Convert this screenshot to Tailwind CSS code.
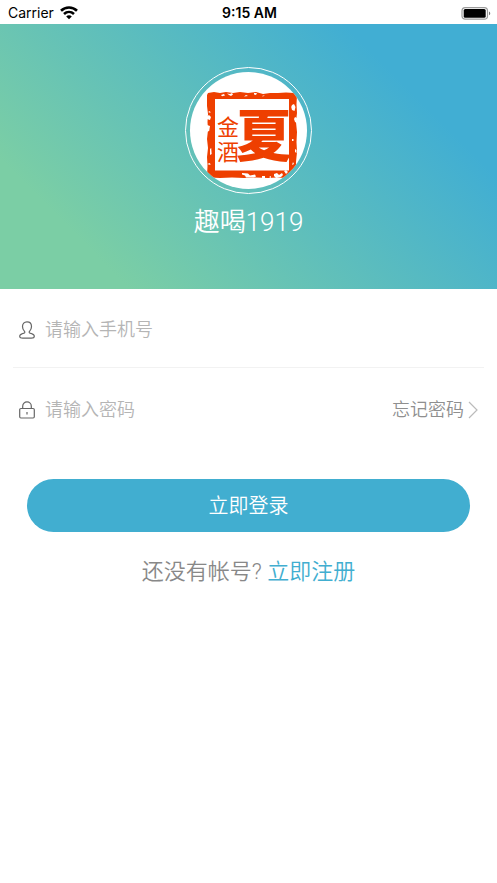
<!DOCTYPE html>
<html lang="zh-CN">
<head>
    <meta charset="UTF-8">
    <meta name="viewport" content="width=device-width, initial-scale=1.0">
    <script src="https://cdn.jsdelivr.net/npm/@tailwindcss/browser@4"></script>
    <title>趣喝1919</title>
</head>
<body class="bg-white font-['Roboto','Noto_Sans_CJK_SC',sans-serif] font-[350]">
    <div id="app" class="min-h-screen">
        <!-- status bar -->
        <div class="grid h-6 grid-cols-3 items-center pl-2 pr-1.5 pt-0.5 font-['Inter',sans-serif] text-sm font-normal text-black">
            <div class="flex items-center gap-1.5">
                <span>Carrier</span>
                <svg class="h-[14px] w-[18px]" viewBox="0 0 18 14" fill="none" stroke="#000" stroke-width="2.6">
                    <path d="M1 4.8C5.500.4 12.500.4 17 4.800"/>
                    <path d="M4 8c2.900-2.700 7.100-2.700 10 0"/>
                    <path d="M9 13.200 6.200 10.400c1.600-1.500 4-1.500 5.600 0Z" fill="#000" stroke="none"/>
                </svg>
            </div>
            <span class="text-center font-semibold">9:15 AM</span>
            <svg class="h-[13px] w-[30px] justify-self-end" viewBox="0 0 30 13" fill="none">
                <rect x="1" y=".7" width="25.500" height="11.500" rx="3.200" stroke="#9b9b9b" stroke-width="1.200"/>
                <rect x="2.700" y="2" width="22" height="8.800" rx="1.500" fill="#000"/>
                <path d="M28 4.500c1.700.7 1.700 3.100 0 3.800Z" fill="#777"/>
            </svg>
        </div>

        <header class="flex h-[265px] flex-col items-center bg-[linear-gradient(45deg,#7bcea5_17%,#41aed3_80%)] pt-[43px]">
            <div class="rounded-full border border-white p-1">
                <svg class="size-[117px] rounded-full bg-white" viewBox="0 0 117 117" role="img" aria-label="金酒 夏">
                    <!-- seal frame with worn edges -->
                    <path fill="#ee3f00" fill-rule="evenodd" d="M17 23 18 21 24 20 30 21 36 20 43 21 50 20 58 21 66 20 73 22 80 21 88 21 96 20.500 104 21 107 23 106.500 32 107 41 106 50 107 60 106.500 70 107 80 106 90 106.500 98 105 105 96 106 87 105.500 78 106 66 105.500 54 106 42 105.500 30 106 20 105.500 17 104 17.500 94 17 85 18 76 17 67 18 58 17.500 50 18 42 17 34ZM25 27V98.500H99V27Z"/>
                    <g fill="#fff">
                        <path d="m31 23 3-1 1 1.500-3 .8ZM37 21.500l3 .5 2-1 1 1.500-2 1.500-2-1ZM54 24.500l2-1.500 2 1ZM64 21h3l-1 2-2-.5ZM72 24l3-1-2 1.500Z"/>
                        <path d="m102 33 2-1 1.500 3-1 4-2.500-1-.8-3ZM105 45l2 1v5l-2-1-1-3ZM102 67h1.500v2H102ZM105 77l1.500 1v3l-1.500-1ZM103 90l1 2-2 1Z"/>
                        <path d="m16 45 3-2 2 2-1 3-3-1ZM17 53l3 1-.8 5-3 1ZM20 77l1.200-1 .5 6-1.700 1ZM18 40l2-1 .5 2ZM17 92l3-1 .5 2Z"/>
                        <path d="m52 101 6 .5 2 2 5-1 1 2-2 1h-8l-1-2-3-1ZM72 104h3v2h-3ZM79 105l2-1v2ZM84 102l3-1 2 2 3-2 1 2-2 2-5 1-2-2ZM94 99l2-1 2 2-2 2Z"/>
                    </g>
                    <g fill="#ee3f00">
                        <text x="27" y="63" font-size="22" font-weight="400" font-family="'Noto Sans CJK SC', sans-serif">金</text>
                        <text x="27" y="88" font-size="22" font-weight="400" font-family="'Noto Sans CJK SC', sans-serif">酒</text>
                        <text x="46" y="84" font-size="56" font-weight="900" font-family="'Noto Sans CJK SC', sans-serif">夏</text>
                    </g>
                </svg>
            </div>
            <h1 class="mt-2 text-[26px] leading-10 text-white">趣喝1919</h1>
        </header>

        <form id="loginForm">
            <div class="mx-[13px] flex h-[79px] items-center gap-2.5 border-b border-[#f2f2f2] pl-1.5 pt-1">
                <label for="phone" aria-label="手机号">
                    <svg class="h-[18px] w-4" viewBox="0 0 16 18" fill="none" stroke="#666" stroke-width="1.200" stroke-linejoin="round">
                        <path d="M8 .8c2.800 0 4.500 2 4.500 4.700 0 2-.8 3.700-2 4.900-.6.7-.4 1.400.5 1.700 2.300.6 4.300 1.300 4.300 3.200 0 1.500-1.300 1.900-3 1.900H3.700C2 17.200.7 16.800.7 15.300c0-1.900 2-2.600 4.300-3.200.9-.3 1.100-1 .5-1.700-1.200-1.200-2-2.900-2-4.900C3.500 2.800 5.200.8 8 .8Z"/>
                    </svg>
                </label>
                <input type="tel" id="phone" placeholder="请输入手机号" class="min-w-0 flex-1 text-lg outline-none placeholder:text-[#b5b5b5]">
            </div>
            <div class="mx-[13px] flex h-[79px] items-center gap-2.5 pl-1.5 pt-1">
                <label for="password" aria-label="密码">
                    <svg class="h-[18px] w-4" viewBox="0 0 16 18" fill="none" stroke="#666" stroke-width="1.200">
                        <rect x=".7" y="7.500" width="14.600" height="9.500" rx="1.200"/>
                        <path d="M3.700 7.500V5.200a4.300 4.300 0 0 1 8.600 0v2.300M8 11v2.500"/>
                    </svg>
                </label>
                <input type="password" id="password" placeholder="请输入密码" class="min-w-0 flex-1 text-lg outline-none placeholder:text-[#b5b5b5]">
                <a href="#" class="flex items-center gap-1 pr-1.5 text-lg text-[#8f8f8f]">
                    忘记密码
                    <svg class="h-[18px] w-[10px]" viewBox="0 0 10 18" fill="none" stroke="#bbb" stroke-width="1.200">
                        <path d="m1 1 8 8-8 8"/>
                    </svg>
                </a>
            </div>
            <div class="px-[27px] pt-8">
                <button type="submit" class="h-[53px] w-full rounded-full bg-[#41aed0] text-xl text-white">立即登录</button>
            </div>
        </form>

        <p class="mt-6 text-center text-[22px] leading-8 text-[#888]">还没有帐号? <a href="#" class="text-[#41aed0]">立即注册</a></p>
    </div>
</body>
</html>
